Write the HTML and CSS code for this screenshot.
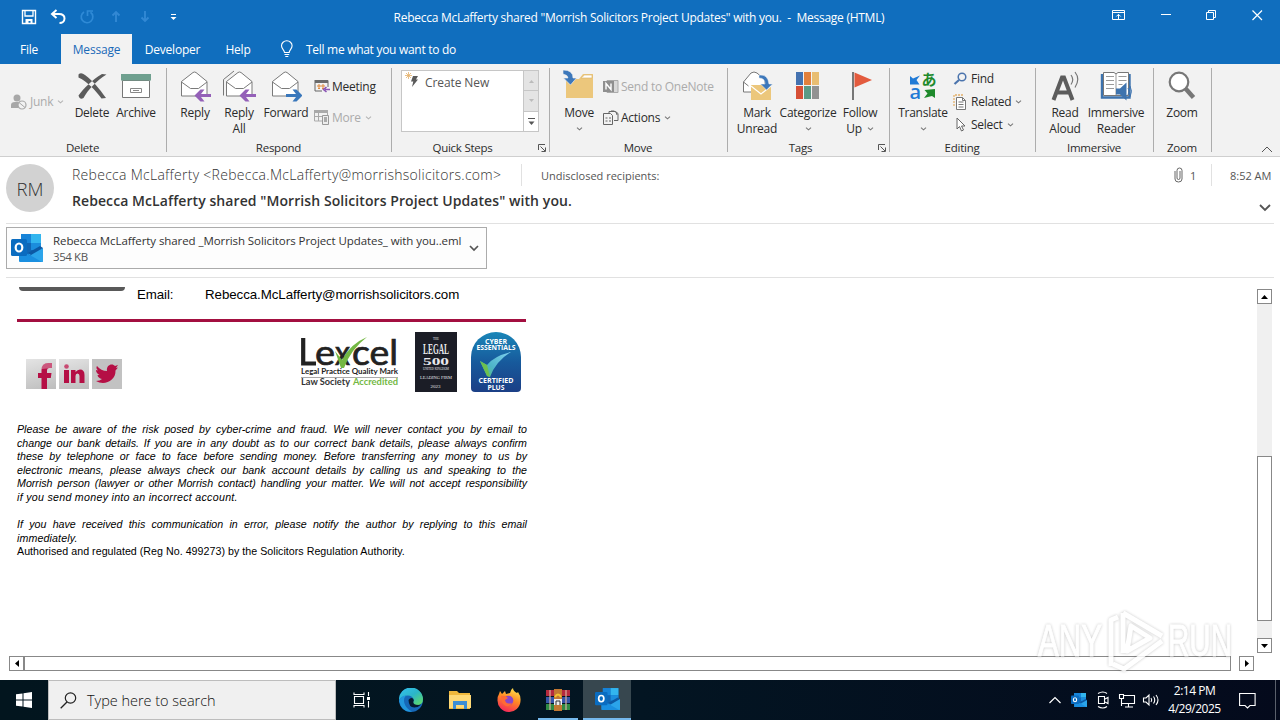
FILE: index.html
```html
<!DOCTYPE html>
<html lang="en">
<head>
<meta charset="utf-8">
<title>Message (HTML)</title>
<link rel="stylesheet" href="styles.css">
</head>
<body>
<svg class="defs" width="0" height="0">
  <defs>
    <linearGradient id="edgeG" x1="0" y1="0" x2="1" y2="1"><stop offset="0" stop-color="#35c1f1"/><stop offset=".5" stop-color="#2bb5c8"/><stop offset="1" stop-color="#66e05a"/></linearGradient>
    <linearGradient id="foxG" x1="0.7" y1="0" x2="0.3" y2="1"><stop offset="0" stop-color="#ffe14d"/><stop offset=".45" stop-color="#ff8a24"/><stop offset="1" stop-color="#f5245c"/></linearGradient>
    <linearGradient id="cyG" x1="0" y1="0" x2="0" y2="1"><stop offset="0" stop-color="#1a86b8"/><stop offset=".5" stop-color="#175a9c"/><stop offset="1" stop-color="#1b3f86"/></linearGradient>
    <linearGradient id="ckG" x1="0" y1="1" x2="1" y2="0"><stop offset="0" stop-color="#5cc06a"/><stop offset=".4" stop-color="#4db4c8"/><stop offset="1" stop-color="#7fd0f0"/></linearGradient>
    <symbol id="outlook" viewBox="0 0 32 28">
      <rect x="10" y="0" width="20" height="23" rx="1" fill="#1066b5"/>
      <rect x="10" y="0" width="10" height="9" fill="#1683d8"/><rect x="20" y="0" width="10" height="9" fill="#32b5ee"/>
      <rect x="20" y="9" width="10" height="7" fill="#1b8ddd"/>
      <path d="M8 15l12 7 12-8v13a1 1 0 0 1-1 1H9a1 1 0 0 1-1-1z" fill="#1a8fe0"/>
      <path d="M32 14v13a1 1 0 0 1-1 1L17 20z" fill="#2ba4ea"/><path d="M20 21l12-7-3-2-12 7z" fill="#0c59a4"/>
      <rect x="0" y="5" width="16" height="17" rx="1.500" fill="#0a6cc0"/>
      <ellipse cx="8" cy="13.500" rx="3.300" ry="4" fill="none" stroke="#fff" stroke-width="2.200"/>
    </symbol>
    <symbol id="envelope" viewBox="0 0 32 32">
      <path d="M3.500 12.500L15 3.500q1.500-1 3 0l11 9V27h-25.500z" fill="#fff" stroke="#7a7a7a"/>
      <path d="M3.500 13l9 6.500h8l8.500-6.500" fill="none" stroke="#7a7a7a"/>
    </symbol>
    <symbol id="chev" viewBox="0 0 7 4"><path d="M1 .600l2.500 2.200L6 .600" fill="none" stroke="#777" stroke-width="1.100"/></symbol>
    <symbol id="launch" viewBox="0 0 8 8"><path d="M.5 6V.5H7M2.500 2.500L7 7M7.500 3.500v4h-4" fill="none" stroke="#555"/></symbol>
  </defs>
</svg>

<header class="titlebar">
  <div class="quick">
    <svg width="16" height="16" viewBox="0 0 16 16"><path d="M1.500 1.500h13v13h-13z" fill="none" stroke="#fff" stroke-width="1.400"/><path d="M4 2v5h8V2" fill="none" stroke="#fff" stroke-width="1.300"/><path d="M4.500 10h7v5h-2v-3h-2v3h-3z" fill="#fff"/></svg>
    <svg width="16" height="16" viewBox="0 0 16 16"><path d="M6.500 1L2 5l4.500 4M2.500 5H9c3.500 0 5.500 2 5.500 4.500S12.500 14 9.500 14" fill="none" stroke="#fff" stroke-width="2"/></svg>
    <svg width="16" height="16" viewBox="0 0 16 16"><path d="M5 3A5.800 5.800 0 1 0 11.500 3.300M8.500 7V2h5.500" fill="none" stroke="#2f8ad6" stroke-width="1.700"/></svg>
    <svg width="16" height="16" viewBox="0 0 16 16"><path d="M8 13V3M4.500 6.500L8 3l3.500 3.500" fill="none" stroke="#3288d4" stroke-width="1.900"/></svg>
    <svg width="16" height="16" viewBox="0 0 16 16"><path d="M8 2v10M4.500 8.500L8 12l3.500-3.500" fill="none" stroke="#3288d4" stroke-width="1.900"/></svg>
    <svg width="16" height="16" viewBox="0 0 16 16"><path d="M5 5.500h5" stroke="#fff"/><path d="M4.500 8h6l-3 3z" fill="#fff"/></svg>
  </div>
  <div class="caption">Rebecca McLafferty shared "Morrish Solicitors Project Updates" with you.&nbsp; -&nbsp; Message (HTML)</div>
  <div class="winbtns">
    <svg width="14" height="11" viewBox="0 0 14 11"><path d="M.5.500h12v9H.5zM.5 2.500h12M6.500 9V4.500M4.300 6.500l2.200-2.200 2.200 2.200" fill="none" stroke="#fff"/></svg>
    <svg width="11" height="11" viewBox="0 0 11 11"><path d="M0 4.500h10" stroke="#fff"/></svg>
    <svg width="11" height="11" viewBox="0 0 11 11"><path d="M.5 2.500h7v7h-7zM2.500 2V.500h7v7H8" fill="none" stroke="#fff"/></svg>
    <svg width="11" height="11" viewBox="0 0 11 11"><path d="M.5.500l9.500 9.500M10 .500l-9.500 9.500" stroke="#fff" stroke-width="1.200"/></svg>
  </div>
</header>

<nav class="tabs">
  <span class="tab tab-file">File</span><span class="tab tab-on">Message</span><span class="tab tab-dev">Developer</span><span class="tab tab-help">Help</span>
  <svg class="bulb" width="14" height="18" viewBox="0 0 14 18"><path d="M4.500 12.500C4.500 10 1.500 9 1.500 5.800a5.300 5 0 0 1 10.600 0C12.100 9 9.200 10 9.200 12.500zM4.500 14.500h4.700M5.300 16.500h3" fill="none" stroke="#fff" stroke-width="1.100"/></svg>
  <span class="tell">Tell me what you want to do</span>
</nav>

<section class="ribbon">
  <div class="group g-delete">
    <div class="items">
      <div class="small-col junk-col"><div class="small off">
        <svg width="17" height="16" viewBox="0 0 17 16"><circle cx="6" cy="4" r="3.500" fill="#a8a8a8"/><path d="M0 14V11q0-3 4-3h4v6z" fill="#a8a8a8"/><circle cx="11" cy="11" r="4" fill="#f2f2f2" stroke="#a8a8a8" stroke-width="1.200"/><path d="M8 8.500l6 5" stroke="#a8a8a8"/></svg>
        <span>Junk</span><svg class="cv" width="7" height="4"><use href="#chev" opacity=".5"/></svg></div></div>
      <div class="big w44"><svg width="32" height="32" viewBox="0 0 32 32"><path d="M2.500 4.500Q5 2 9 5c8 6 14 13 21 23l-4.500.5C19 20 12 12 2.500 7.500zM30.500 4.500L26 4C16 10 8 18 2.500 25.500q1.500 5 5 2.500C12 20 20 11 30.500 4.500z" fill="#5b5b5b"/></svg><span>Delete</span></div>
      <div class="big w44"><svg width="32" height="32" viewBox="0 0 32 32"><path d="M2.500 10.500h27v17h-27z" fill="#fff" stroke="#777"/><path d="M1 4h30v6.500H1z" fill="#6fa08f"/><path d="M10.500 18.500h11v4h-11zM13 20.500h6" fill="none" stroke="#888"/></svg><span>Archive</span></div>
    </div>
    <div class="glabel">Delete</div>
  </div>

  <div class="group g-respond">
    <div class="items">
      <div class="big w44"><svg width="32" height="32" viewBox="0 0 32 32"><use href="#envelope" transform="translate(-1 -1)" width="32" height="32"/><path d="M32 24v3H22l3.500 4.500h-4L15.500 25.500l6-6h4L22 24z" fill="#9460b8"/></svg><span>Reply</span></div>
      <div class="big w44"><svg width="34" height="32" viewBox="0 0 34 32"><path d="M1.500 25.500V9.500L12 1" fill="none" stroke="#777"/><use href="#envelope" transform="translate(1 -1)" width="32" height="32"/><path d="M34 24v3H24l3.500 4.500h-4L17.500 25.500l6-6h4L24 24z" fill="#9460b8"/></svg><span>Reply<br>All</span></div>
      <div class="big w50"><svg width="32" height="32" viewBox="0 0 32 32"><use href="#envelope" transform="translate(-1 -1)" width="32" height="32"/><path d="M16 24v3h10l-3.500 4.500h4l6-6-6-6h-4L26 24z" fill="#3977bb"/></svg><span>Forward</span></div>
      <div class="small-col respond-col">
        <div class="small"><svg width="16" height="15" viewBox="0 0 16 15"><path d="M1 1.500h13V8M1 1v11h7" fill="none" stroke="#666"/><path d="M1 1h13v3H1z" fill="#6b6b6b"/><path d="M4 6h2v2H4zM8 6h2v2H8zM4 9.500h2M8 9.500h2" fill="none" stroke="#e08a3c"/><path d="M16 10.500h-5M12.500 8l-3 2.500 3 2.500" fill="none" stroke="#8b55b5" stroke-width="1.600"/></svg><span>Meeting</span></div>
        <div class="small off"><svg width="16" height="15" viewBox="0 0 16 15"><path d="M0 0h14v3H0z" fill="#aaa"/><path d="M.500 2v9H8M4.500 3v8M.500 6.500H8M13.500 3v2" fill="none" stroke="#aaa"/><path d="M8.500 5.500h6v9h-6z" fill="#eee" stroke="#999"/><path d="M10 7h3v5h-3z" fill="#aaa"/></svg><span>More</span><svg class="cv" width="7" height="4"><use href="#chev" opacity=".5"/></svg></div>
      </div>
    </div>
    <div class="glabel">Respond</div>
  </div>

  <div class="group g-quick">
    <div class="steps">
      <div class="step"><svg width="16" height="16" viewBox="0 0 16 16"><path d="M3.500 0v7M0 3.500h7M1 1l5 5M6 1L1 6" stroke="#e3b06a" stroke-width=".8"/><path d="M8 4h5l-2 3.500h2L7 15l1.300-5.500H6z" fill="#5a5a5a"/></svg><span>Create New</span></div>
      <div class="spin"><i class="dis"><svg width="7" height="4"><path d="M3.500 1L6 4H1z" fill="#bbb"/></svg></i><i class="dis"><svg width="7" height="4"><path d="M3.500 3L6 0H1z" fill="#bbb"/></svg></i><i><svg width="7" height="7"><path d="M0 .500h7" stroke="#555"/><path d="M3.500 7L6.500 3.500h-6z" fill="#555"/></svg></i></div>
    </div>
    <div class="glabel">Quick Steps</div>
    <svg class="launcher" width="8" height="8"><use href="#launch"/></svg>
  </div>

  <div class="group g-move">
    <div class="items">
      <div class="big w44"><svg width="32" height="32" viewBox="0 0 32 32"><path d="M3 9h13l4-5h10v24H3z" fill="#ecc77c"/><path d="M18 8l3.500-3H29v3z" fill="#fff" stroke="#ddb870" stroke-width=".7"/><path d="M0 0q10 0 10 8h3.500l-6 7-7-7H5Q5 5 0 4z" fill="#3d78bb" stroke="#f2f2f2" stroke-width=".6"/></svg><span>Move</span><svg class="dd" width="7" height="4"><use href="#chev"/></svg></div>
      <div class="small-col move-col">
        <div class="small off"><svg width="16" height="15" viewBox="0 0 16 15"><path d="M4 1.500h11v12H4z" fill="#d8d8d8" stroke="#aaa"/><path d="M0 2h11v11H0z" fill="#8f8f8f"/><path d="M3 10.500V4.500l5 6v-6" fill="none" stroke="#fff" stroke-width="1.400"/></svg><span>Send to OneNote</span></div>
        <div class="small"><svg width="16" height="16" viewBox="0 0 16 16"><path d="M.5 3.500h7l2 2v9h-9zM2.500 8h2M2.500 11h2M6 8h2M6 11h2" fill="none" stroke="#666"/><path d="M6 3V1.500h6.500l2.500 2v7h-4M8 1h3q3 1 3 4" fill="none" stroke="#666"/></svg><span>Actions</span><svg class="cv" width="7" height="4"><use href="#chev"/></svg></div>
      </div>
    </div>
    <div class="glabel">Move</div>
  </div>

  <div class="group g-tags">
    <div class="items">
      <div class="big w44"><svg width="32" height="32" viewBox="0 0 32 32"><path d="M2.500 12L10 3q3-2 6 0l8 7v12H2.500z" fill="#fff" stroke="#777"/><path d="M2.500 12l5 4" stroke="#777"/><path d="M10 15h20v15H10z" fill="#ecc77c"/><path d="M10 16l10 8 10-8" fill="none" stroke="#fff" stroke-width="1.200"/><path d="M18 5q9-1 10 9h3.500l-6 6-6-6H24q0-6-6-6z" fill="#3d78bb" stroke="#f2f2f2" stroke-width=".5"/></svg><span>Mark<br>Unread</span></div>
      <div class="big w58"><svg width="32" height="32" viewBox="0 0 32 32"><path d="M4 2h7v13H4z" fill="#4472b0"/><path d="M12 2h7v13h-7z" fill="#e2803c"/><path d="M20 2h7v13h-7z" fill="#e8bd72"/><path d="M4 16h7v13H4z" fill="#d64f36"/><path d="M12 16h7v13h-7z" fill="#5a9a86"/><path d="M20 16h7v13h-7z" fill="#929292"/></svg><span>Categorize</span><svg class="dd" width="7" height="4"><use href="#chev"/></svg></div>
      <div class="big w46"><svg width="32" height="32" viewBox="0 0 32 32"><path d="M9 2v28" stroke="#777" stroke-width="2"/><path d="M10.500 2.500L28 10l-17.500 7.500z" fill="#e35b3e"/></svg><span>Follow<br>Up <svg class="cv" width="7" height="4"><use href="#chev"/></svg></span></div>
    </div>
    <div class="glabel">Tags</div>
    <svg class="launcher" width="8" height="8"><use href="#launch"/></svg>
  </div>

  <div class="group g-edit">
    <div class="items">
      <div class="big w50"><svg class="over" width="32" height="32" viewBox="0 0 32 32"><path d="M3 6l3 2.500 7-3-3.500 4.500 3 4.500H3z" fill="#1f7ad6"/><text x="2.500" y="29" class="tr-a">a</text><text x="14.500" y="15" class="tr-j">あ</text><path d="M28 19v9l-3-2-8 2 3.500-4.500-3-3.500z" fill="#1e8a2c"/></svg><span>Translate</span><svg class="dd" width="7" height="4"><use href="#chev"/></svg></div>
      <div class="small-col edit-col">
        <div class="small"><svg width="16" height="14" viewBox="0 0 16 14"><circle cx="9" cy="5" r="3.800" fill="none" stroke="#4b74ad" stroke-width="1.500"/><path d="M6 8l-4.500 4" stroke="#4b74ad" stroke-width="2.200"/></svg><span>Find</span></div>
        <div class="small"><svg width="16" height="16" viewBox="0 0 16 16"><path d="M1 12V1h9" fill="none" stroke="#e3b06a" stroke-width="1.300" stroke-dasharray="2 1"/><path d="M3.500 3.500h6l3 3v9h-9z" fill="#fff" stroke="#777"/><path d="M5.500 8h5M5.500 10.500h5M5.500 13h5M9.500 3.500v3h3" fill="none" stroke="#777"/></svg><span>Related</span><svg class="cv" width="7" height="4"><use href="#chev"/></svg></div>
        <div class="small"><svg width="16" height="16" viewBox="0 0 16 16"><path d="M4 1v11l2.500-2.500 2 4.500 2-1-2-4H12z" fill="#fff" stroke="#666"/></svg><span>Select</span><svg class="cv" width="7" height="4"><use href="#chev"/></svg></div>
      </div>
    </div>
    <div class="glabel">Editing</div>
  </div>

  <div class="group g-imm">
    <div class="items">
      <div class="big w44"><svg width="32" height="32" viewBox="0 0 32 32"><path d="M4.500 30L13 7.500h2L23.500 30M8 22.500h12" fill="none" stroke="#5c5c5c" stroke-width="4"/><path d="M22 5q3.500 4.500 0 9.500M26 2q5.500 7 0 15.500" fill="none" stroke="#777" stroke-width="1.200"/></svg><span>Read<br>Aloud</span></div>
      <div class="big w58"><svg width="32" height="32" viewBox="0 0 32 32"><path d="M2 4v23.500h27.500V4" fill="none" stroke="#3d73ae" stroke-width="2.400"/><path d="M3.500 2.500H14l2 1.500 2-1.500h10.500v23H3.500z" fill="#fff" stroke="#777"/><path d="M16 4v21M6 6.500h8M6 10.500h8M6 14.500h8M6 18.500h8M18.500 6.500h8M18.500 10.500h8M18.500 14.500h4" stroke="#999"/><path d="M16 18.500h4l6.500-6v18l-6.500-6h-4z" fill="#3d73ae"/><path d="M28 18q2 3 0 7M30 16q3 5 0 11" fill="none" stroke="#3d73ae"/></svg><span>Immersive<br>Reader</span></div>
    </div>
    <div class="glabel">Immersive</div>
  </div>

  <div class="group g-zoom">
    <div class="items"><div class="big w56"><svg width="32" height="32" viewBox="0 0 32 32"><circle cx="13" cy="12" r="9.300" fill="#fff" stroke="#777" stroke-width="2.200"/><path d="M19.500 18.500l8 9" stroke="#777" stroke-width="4.500"/></svg><span>Zoom</span></div></div>
    <div class="glabel">Zoom</div>
  </div>
  <svg class="collapse" width="12" height="7" viewBox="0 0 12 7"><path d="M1 6l5-5 5 5" fill="none" stroke="#555"/></svg>
</section>

<section class="head">
  <div class="avatar">RM</div>
  <div class="who">
    <div class="fromline"><span class="from">Rebecca McLafferty &lt;Rebecca.McLafferty@morrishsolicitors.com&gt;</span><span class="to">Undisclosed recipients:</span></div>
    <div class="subject">Rebecca McLafferty shared "Morrish Solicitors Project Updates" with you.</div>
  </div>
  <div class="meta">
    <div class="metaline"><svg width="9" height="16" viewBox="0 0 9 16"><path d="M1 4v8q0 3 3.500 3T8 12V3.500Q8 1 5.500 1T3 3.500V11q0 1.500 1.500 1.500T6 11V4" fill="none" stroke="#666"/></svg><span class="count">1</span><span class="time">8:52 AM</span></div>
    <svg class="expand" width="12" height="8" viewBox="0 0 12 8"><path d="M1 1l5 5 5-5" fill="none" stroke="#555" stroke-width="1.800"/></svg>
  </div>
</section>

<section class="attach">
  <div class="file">
    <svg width="32" height="28"><use href="#outlook"/></svg>
    <div class="ftext"><div class="fname">Rebecca McLafferty shared _Morrish Solicitors Project Updates_ with you..eml</div><div class="fsize">354 KB</div></div>
    <svg width="10" height="7" viewBox="0 0 10 7"><path d="M1 1l4 4 4-4" fill="none" stroke="#555" stroke-width="1.700"/></svg>
  </div>
</section>

<main class="viewer">
  <article class="mail">
    <div class="sigrow"><i class="darkbar"></i><span class="elabel">Email:</span><span class="eaddr">Rebecca.McLafferty@morrishsolicitors.com</span></div>
    <div class="rule"></div>
    <div class="logos">
      <div class="social">
        <i><svg width="30" height="30" viewBox="0 0 30 30"><path d="M15.500 30V19H12v-5h3.500v-3q0-7 7-7H26v5h-2.500q-2.500 0-2.500 2.500V14h4.500l-.7 5H21v11z" fill="#b50f45"/><path d="M15.500 10q0-6 7-6H26v5l-10 1z" fill="#fff" opacity=".3"/></svg></i>
        <i><svg width="30" height="30" viewBox="0 0 30 30"><path d="M5 11h5v13H5zM12 11h4.500v2q2-2.500 4.500-2.500 4.500 0 4.500 5.500v8h-5v-7q0-2.500-2-2.500t-2 2.500v7H12z" fill="#b50f45"/><circle cx="7.500" cy="7.500" r="2.300" fill="#c84a72"/></svg></i>
        <i class="flat"><svg width="30" height="30" viewBox="0 0 30 30"><path d="M5 7q4 5 10 5c-1-7 6-8 8-5l3-1-2 3 2-.5-2.500 3C24 22 12 27 4 22q4 0 6-2-4-1-4.500-4h2Q4 14 4 11l2 .5Q3.500 9 5 7z" fill="#b50f45"/></svg></i>
      </div>
      <svg class="lexcel" width="101" height="60" viewBox="0 0 101 60">
        <path d="M3.200 6v25.500H16" fill="none" stroke="#222" stroke-width="4.200"/>
        <text x="15" y="33" class="lx" textLength="20" lengthAdjust="spacingAndGlyphs">e</text><text x="35" y="33" class="lx" textLength="15" lengthAdjust="spacingAndGlyphs">x</text><text x="52" y="33" class="lx" textLength="46" lengthAdjust="spacingAndGlyphs">cel</text>
        <path d="M35 19l7 9Q50 12 67 5 51 17 44 36h-3z" fill="#73b843"/>
        <text x="1" y="42" class="lx2" textLength="97" lengthAdjust="spacingAndGlyphs">Legal Practice Quality Mark</text>
        <path d="M1 45.500h97" stroke="#aaa"/>
        <text x="1" y="53" class="lx3" textLength="49" lengthAdjust="spacingAndGlyphs">Law Society</text><text x="53" y="53" class="lx3 grn" textLength="45" lengthAdjust="spacingAndGlyphs">Accredited</text>
      </svg>
      <svg class="legal" width="42" height="60" viewBox="0 0 42 60"><path d="M0 0h42v60H0z" fill="#1b1d26"/>
        <text x="18" y="8" class="lg tiny">THE</text><text x="8" y="22" class="lg big1" textLength="26" lengthAdjust="spacingAndGlyphs">LEGAL</text><text x="8" y="33" class="lg big5" textLength="26" lengthAdjust="spacingAndGlyphs">500</text><text x="8" y="38" class="lg tiny" textLength="26" lengthAdjust="spacingAndGlyphs">UNITED KINGDOM</text><text x="5" y="47" class="lg ll" textLength="32" lengthAdjust="spacingAndGlyphs">LEADING FIRM</text><text x="15.500" y="56" class="lg ll">2023</text></svg>
      <svg class="cyber" width="50" height="60" viewBox="0 0 50 60"><path d="M0 25a25 25 0 0 1 50 0v31q0 4-4 4H4q-4 0-4-4z" fill="url(#cyG)"/>
        <text x="25" y="11.500" class="cy" textLength="22" lengthAdjust="spacingAndGlyphs">CYBER</text><text x="25" y="18" class="cy" textLength="39" lengthAdjust="spacingAndGlyphs">ESSENTIALS</text>
        <path d="M9 29l7 4q7-9 24-13-15 9-21 25l-3-1z" fill="url(#ckG)"/><path d="M9 29l7 4 3 12-3-1z" fill="#6cc04e"/>
        <text x="25" y="51" class="cy" textLength="35" lengthAdjust="spacingAndGlyphs">CERTIFIED</text><text x="25" y="57.500" class="cy" textLength="17" lengthAdjust="spacingAndGlyphs">PLUS</text></svg>
    </div>
    <div class="legaltext">
      <div class="j">Please be aware of the risk posed by cyber-crime and fraud. We will never contact you by email to</div>
      <div class="j">change our bank details. If you are in any doubt as to our correct bank details, please always confirm</div>
      <div class="j">these by telephone or face to face before sending money. Before transferring any money to us by</div>
      <div class="j">electronic means, please always check our bank account details by calling us and speaking to the</div>
      <div class="j">Morrish person (lawyer or other Morrish contact) handling your matter. We will not accept responsibility</div>
      <div class="l1">if you send money into an incorrect account.</div>
      <div>&nbsp;</div>
      <div class="j">If you have received this communication in error, please notify the author by replying to this email</div>
      <div class="l2">immediately.</div>
      <div class="up">Authorised and regulated (Reg No. 499273) by the Solicitors Regulation Authority.</div>
    </div>
  </article>
  <div class="vbar"><i class="sb"><svg width="7" height="4"><path d="M3.500 0L7 4H0z"/></svg></i><div class="vtrack"><div class="vthumb"></div></div><i class="sb"><svg width="7" height="4"><path d="M3.500 4L7 0H0z"/></svg></i></div>
  <div class="hbar"><i class="sb"><svg width="4" height="7"><path d="M0 3.500L4 0v7z"/></svg></i><div class="hthumb"></div><i class="sb"><svg width="4" height="7"><path d="M4 3.500L0 0v7z"/></svg></i></div>
  <svg class="mark" width="204" height="74" viewBox="0 0 204 74">
    <g class="wm"><text x="4" y="50" textLength="64" lengthAdjust="spacingAndGlyphs">ANY</text><text x="134" y="50" textLength="64" lengthAdjust="spacingAndGlyphs">RUN</text>
    <path d="M77 60V14l7-3M89 7l39 23M89 7v40M128 35L90 63l-11-5M93 45l23-13-19-12z" class="wmp"/></g>
  </svg>
</main>

<footer class="taskbar">
  <div class="start"><svg width="16" height="16" viewBox="0 0 16 16"><path d="M0 2.300L6.500 1.400v6.100H0zM7.500 1.200L16 0v7.500H7.500zM0 8.500h6.500v6.100L0 13.700zM7.500 8.500H16V16l-8.500-1.200z" fill="#fff"/></svg></div>
  <div class="search"><svg width="17" height="17" viewBox="0 0 17 17"><circle cx="10.500" cy="6" r="5.200" fill="none" stroke="#222" stroke-width="1.200"/><path d="M7 10L.7 16.300" stroke="#222" stroke-width="1.300"/></svg><span>Type here to search</span></div>
  <div class="app"><svg width="18" height="16" viewBox="0 0 18 16"><path d="M1 .500v2h10v-2M1 15.500v-2h10v2M1.500 4.500h9v7h-9zM15.500 0v4M15.500 9v6.500" fill="none" stroke="#fff" stroke-width="1.100"/><path d="M14 5h3v3h-3z" fill="#fff"/></svg></div>
  <div class="app"><svg width="24" height="24" viewBox="0 0 24 24"><circle cx="12" cy="12" r="12" fill="#1668b8"/><path d="M0 12A12 12 0 0 1 24 11q0 6-6 6-5 0-4-3 1-1 .5-3Q13 7.500 9 7.500 3 7.500 0 12z" fill="url(#edgeG)"/><path d="M0 13q1-5 7-5.500-3 3-1.500 8T13 23.500Q3 25 0 13z" fill="#2196dd"/><path d="M9.500 12q2-3 4.500-1.500 1.500 1.500.3 3.500 0 3 5 3l3-.5q-3 3-7 3-5.500 0-5.800-7.500z" fill="#061a30"/></svg></div>
  <div class="app"><svg width="22" height="20" viewBox="0 0 22 20"><path d="M0 1h8l2 2h11v16H0z" fill="#f0b83c"/><path d="M0 5h22v13H0z" fill="#ffd976"/><path d="M4 19v-8h14v8h-3v-4H7v4z" fill="#3d8ed4"/></svg></div>
  <div class="app"><svg width="24" height="24" viewBox="0 0 24 24"><path d="M2 6l1-3 2 3 3-3 1 3 4-1q1-4 3-5 0 3 4 5l1-1q3 4 2.500 9A11.500 11.500 0 0 1 .500 12Q.500 8 2 6z" fill="url(#foxG)"/><circle cx="11.500" cy="12.500" r="4.800" fill="#8a46c8"/><path d="M4 8q4-1 7 2l-3 2q1 5 7 3-2 4-6 3Q4 16 4 8z" fill="#ff6a35"/></svg></div>
  <div class="app run"><svg width="24" height="22" viewBox="0 0 24 22"><path d="M0 1h24v6H0z" fill="#b52a3e"/><path d="M0 8h24v6H0z" fill="#3655a8"/><path d="M0 15h24v6H0z" fill="#2f8a44"/><path d="M4 1v20M20 1v20" stroke="#d8b0a0" stroke-width="1.200"/><path d="M8 0h8v22H8z" fill="#c27833"/><path d="M9 8q3-5 6 0" fill="none" stroke="#f4c430" stroke-width="2"/><path d="M8 10h8v6H8z" fill="#eee"/><path d="M10 16v-4h4v4" fill="none" stroke="#333"/></svg></div>
  <div class="app active"><svg width="25" height="22"><use href="#outlook"/></svg></div>
  <div class="tray">
    <svg width="24" height="20" viewBox="0 0 24 20"><path d="M6.500 13L12 7.500l5.500 5.500" fill="none" stroke="#fff" stroke-width="1.200"/></svg>
    <svg width="24" height="20" viewBox="0 0 24 20"><path d="M7 3h11v14H7z" fill="#1585d8"/><use href="#outlook" x="4" y="3" width="16" height="14"/></svg>
    <svg width="24" height="20" viewBox="0 0 24 20"><path d="M7.500 6.500h6v7h-6zM14 9l3-1.500v6L14 12M7 3.500q5-3 9 0M7 16.500q5 3 9 0" fill="none" stroke="#fff" stroke-width="1.100"/></svg>
    <svg width="24" height="20" viewBox="0 0 24 20"><path d="M9 5.500h10.500v8H9M13.500 14v3M10 17h8M4.500 4.500h4v4h-4zM6.500 9v7M6.500 13.500H9" fill="none" stroke="#fff" stroke-width="1.100"/></svg>
    <svg width="24" height="20" viewBox="0 0 24 20"><path d="M4.500 8v4H7l3 3V5L7 8zM12 8q1.500 2 0 4M14.500 6.500q2.500 3.500 0 7M17 5q4 5 0 10" fill="none" stroke="#fff" stroke-width="1.100"/></svg>
  </div>
  <div class="clock"><span>2:14 PM</span><span>4/29/2025</span></div>
  <svg class="note" width="17" height="17" viewBox="0 0 17 17"><path d="M.6 1.500h15.500v12H11L8.500 16 6 13.500H.6z" fill="none" stroke="#fff" stroke-width="1.100"/></svg>
  <i class="showdesk"></i>
</footer>
</body>
</html>
```
FILE: styles.css
```css
* { box-sizing: border-box; }
body { margin: 0; width: 1280px; height: 720px; overflow: hidden; background: #fff; font-family: "Open Sans", "Noto Sans", sans-serif; font-size: 12px; color: #333; display: flex; flex-direction: column; white-space: nowrap; }
svg { display: block; flex: none; }
i { font-style: normal; display: block; }
body > * { flex: none; }
.defs { position: absolute; }
.over { overflow: visible; }

.titlebar { height: 34px; background: #106ebe; color: #fff; display: grid; grid-template-columns: 340px 600px 340px; }
.quick { display: flex; gap: 13px; padding: 9px 0 0 21px; }
.caption { text-align: center; line-height: 36px; font-size: 12px; letter-spacing: -.27px; padding-right: 2px; }
.winbtns { display: flex; justify-content: space-between; padding: 10px 17px 0 172px; }

.tabs { height: 30px; background: #106ebe; color: #fff; display: flex; line-height: 31px; letter-spacing: -.2px; }
.tab { text-align: center; }
.tab-file { width: 58px; }
.tab-on { margin-left: 3px; width: 71px; background: #f2f2f2; color: #1a6ab8; }
.tab-dev { width: 81px; }
.tab-help { width: 50px; }
.bulb { margin: 6px 0 0 17px; }
.tell { margin-left: 12px; letter-spacing: -.29px; }

.ribbon { height: 93px; background: #f2f2f2; border-bottom: 1px solid #cfcfcf; display: flex; position: relative; color: #2b2b2b; letter-spacing: -.25px; }
.group { position: relative; display: flex; flex-direction: column; height: 92px; }
.group::after { content: ""; position: absolute; right: 0; top: 4px; height: 84px; width: 1px; background: #adadad; }
.g-delete { width: 167px; } .g-respond { width: 225px; } .g-quick { width: 158px; } .g-move { width: 178px; }
.g-tags { width: 162px; } .g-edit { width: 146px; } .g-imm { width: 118px; } .g-zoom { width: 58px; }
.items { display: flex; height: 76px; }
.g-respond .items { padding-left: 6px; }
.g-move .items { padding-left: 7px; }
.g-tags .items { padding-left: 7px; }
.g-edit .items { padding-left: 8px; }
.g-imm .items { padding-left: 7px; }
.glabel { text-align: center; line-height: 16px; height: 16px; font-size: 11.500px; padding-right: 2px; }
.g-quick .glabel { padding-right: 17px; margin-top: 8px; }
.g-tags .glabel { padding-right: 17px; }
.big { display: flex; flex-direction: column; align-items: center; padding-top: 6px; text-align: center; line-height: 16px; }
.big > span { margin-top: 3px; }
.w44 { width: 44px; } .w46 { width: 46px; } .w50 { width: 50px; } .w56 { width: 56px; } .w58 { width: 58px; }
.dd { margin-top: 6px; }
.cv { margin-left: 4px; display: inline-block; }
.big .cv { margin: 0 0 2px 2px; vertical-align: middle; }
.small-col { display: flex; flex-direction: column; }
.small { display: flex; align-items: center; gap: 2px; height: 31px; }
.small .cv { margin-left: 2px; }
.off { color: #ababab; }
.junk-col { width: 70px; padding: 22px 0 0 11px; }
.respond-col { padding: 7px 0 0 3px; }
.move-col { padding: 7px 0 0 2px; }
.edit-col { padding: 3px 0 0 5px; }
.edit-col .small { height: 23px; }
.tr-a { font: 600 20px/1 "Open Sans", sans-serif; fill: #1f7ad6; }
.tr-j { font: bold 15px/1 "Noto Sans CJK JP", sans-serif; fill: #1e8a2c; }
.steps { margin: 6px 11px 0 9px; height: 62px; background: #fff; border: 1px solid #c6c6c6; display: flex; }
.step { flex: 1; display: flex; gap: 3px; padding: 0 0 0 3px; line-height: 23px; letter-spacing: -.1px; }
.step svg { margin-top: 1px; }
.step span { margin-left: 1px; color: #555; }
.spin { width: 15px; border-left: 1px solid #c6c6c6; display: flex; flex-direction: column; }
.spin i { flex: 1; display: flex; align-items: center; justify-content: center; border-bottom: 1px solid #c6c6c6; }
.spin i:last-child { border: 0; }
.spin .dis { background: #e4e4e4; }
.launcher { position: absolute; right: 4px; bottom: 4px; }
.collapse { margin: 82px 0 0 49px; }

.head { height: 67px; display: flex; margin: 0 6px; border-bottom: 1px solid #e1e1e1; color: #555; }
.avatar { width: 48px; height: 48px; border-radius: 50%; background: #d2d2d2; margin-top: 7px; text-align: center; line-height: 49px; font-size: 18.500px; letter-spacing: 0; font-weight: 300; color: #333; }
.who { margin-left: 18px; flex: 1; }
.fromline { display: flex; margin-top: 7px; height: 22px; line-height: 22px; }
.from { width: 450px; font-size: 14px; font-weight: 300; border-right: 1px solid #e1e1e1; letter-spacing: .28px; color: #333; }
.to { margin-left: 19px; font-size: 11px; line-height: 24px; }
.subject { font-size: 14px; font-weight: 600; line-height: 20px; margin-top: 5px; letter-spacing: .08px; color: #333; }
.meta { width: 100px; }
.metaline { display: flex; height: 22px; margin-top: 7px; line-height: 24px; font-size: 11px; letter-spacing: 0; }
.metaline svg { margin-top: 3px; }
.count { margin-left: 7px; width: 22px; border-right: 1px solid #e1e1e1; }
.time { margin-left: 18px; }
.expand { margin: 18px 0 0 85px; }

.attach { height: 54px; margin: 0 6px; padding-top: 3px; border-bottom: 1px solid #e1e1e1; }
.file { width: 481px; height: 42px; border: 1px solid #ababab; background: #fdfdfd; display: flex; align-items: center; padding-left: 4px; }
.ftext { margin-left: 10px; width: 416px; line-height: 16px; padding-top: 1px; }
.fname { font-size: 11.500px; letter-spacing: -.08px; }
.fsize { font-size: 11.500px; letter-spacing: -.4px; color: #555; }

.viewer { height: 402px; display: grid; grid-template-columns: 1248px 15px; grid-template-rows: 367px 15px; row-gap: 2px; padding: 9px 0 0 9px; position: relative; }
.mail { padding-left: 8px; overflow: hidden; color: #000; font-family: "Liberation Sans", Arial, sans-serif; }
.sigrow { display: flex; height: 32px; font-size: 13.330px; }
.darkbar { width: 106px; height: 4px; margin-left: 2px; background: #595959; border-radius: 0 0 6px 6px; }
.elabel { margin-left: 12px; width: 68px; letter-spacing: -.1px; }
.eaddr { letter-spacing: -.07px; }
.rule { width: 509px; height: 3px; background: #a30f40; }
.logos { display: flex; padding: 10px 0 0; height: 101px; }
.social { display: flex; gap: 3px; margin: 27px 178px 0 9px; }
.social i { width: 30px; height: 30px; background: linear-gradient(165deg, #e4e4e4, #bdbdbd); }
.social .flat { background: #c2c2c2; }
.lexcel { margin-right: 14px; }
.legal { margin-right: 14px; }
.lx { font: 35px/1 Lato, sans-serif; fill: #222; stroke: #222; stroke-width: .7; }
.lx2 { font: bold 8px/1 Lato, sans-serif; fill: #222; }
.lx3 { font: bold 8.500px/1 Lato, sans-serif; fill: #333; }
.grn { fill: #73b843; }
.lg { font-family: "Liberation Serif", serif; fill: #e8e8ec; }
.tiny { font-size: 3px; }
.big1 { font-size: 14px; font-weight: bold; }
.big5 { font-size: 11px; font-weight: bold; }
.ll { font-size: 5px; }
.cy { font: bold 6.500px/1 "Open Sans", sans-serif; fill: #fff; text-anchor: middle; }
.legaltext { width: 510px; font-size: 10.670px; line-height: 13.600px; font-style: italic; }
.j { text-align: justify; text-align-last: justify; }
.l1 { letter-spacing: .28px; }
.l2 { letter-spacing: .12px; }
.up { font-style: normal; letter-spacing: .03px; }

.sb { width: 15px; height: 15px; border: 1px solid #888; background: #fff; display: flex; align-items: center; justify-content: center; flex: none; }
.vbar { display: flex; flex-direction: column; padding-top: 2px; height: 366px; }
.vtrack { flex: 1; background: #f0f0f0; padding-top: 152px; }
.vthumb { height: 165px; background: #fff; border: 1px solid #888; }
.hbar { grid-row: 2; display: flex; width: 1245px; justify-content: space-between; }
.hthumb { width: 1207px; margin: 0 8px 0 0; background: #fff; border: 1px solid #888; height: 15px; }
.mark { position: absolute; left: 1034px; top: 328px; }
.wm { filter: drop-shadow(0 0 1.500px rgba(0,0,0,.25)); opacity: .85; }
.wm text { font: 45px/1 "Liberation Sans", sans-serif; fill: #fff; stroke: #fff; stroke-width: 1; }
.wmp { fill: none; stroke: #fff; stroke-width: 5; stroke-linejoin: round; }

.taskbar { height: 40px; background: linear-gradient(90deg, #02151e, #031522 50%, #040a1c); display: flex; color: #fff; }
.start { width: 48px; display: flex; align-items: center; justify-content: center; }
.search { width: 288px; background: #f0f0f0; border: 1px solid #bdbdbd; display: flex; align-items: center; padding-left: 11px; margin-right: 1px; color: #111; }
.search span { margin: 1px 0 0 10px; font-size: 14.500px; font-weight: 300; letter-spacing: -.03px; }
.app { width: 49px; display: flex; align-items: center; justify-content: center; }
.run { width: 50px; background: linear-gradient(#76b9ed, #76b9ed) 5px 38px / 40px 2px no-repeat; }
.active { width: 48px; background: #37474f; border-bottom: 2px solid #76b9ed; }
.tray { margin-left: auto; display: flex; align-items: center; }
.clock { width: 63px; display: flex; flex-direction: column; text-align: center; line-height: 18px; padding-top: 2px; font-size: 12px; letter-spacing: -.5px; }
.note { margin: 12px 19px 0 13px; }
.showdesk { width: 5px; border-left: 1px solid #5a606c; }
```
